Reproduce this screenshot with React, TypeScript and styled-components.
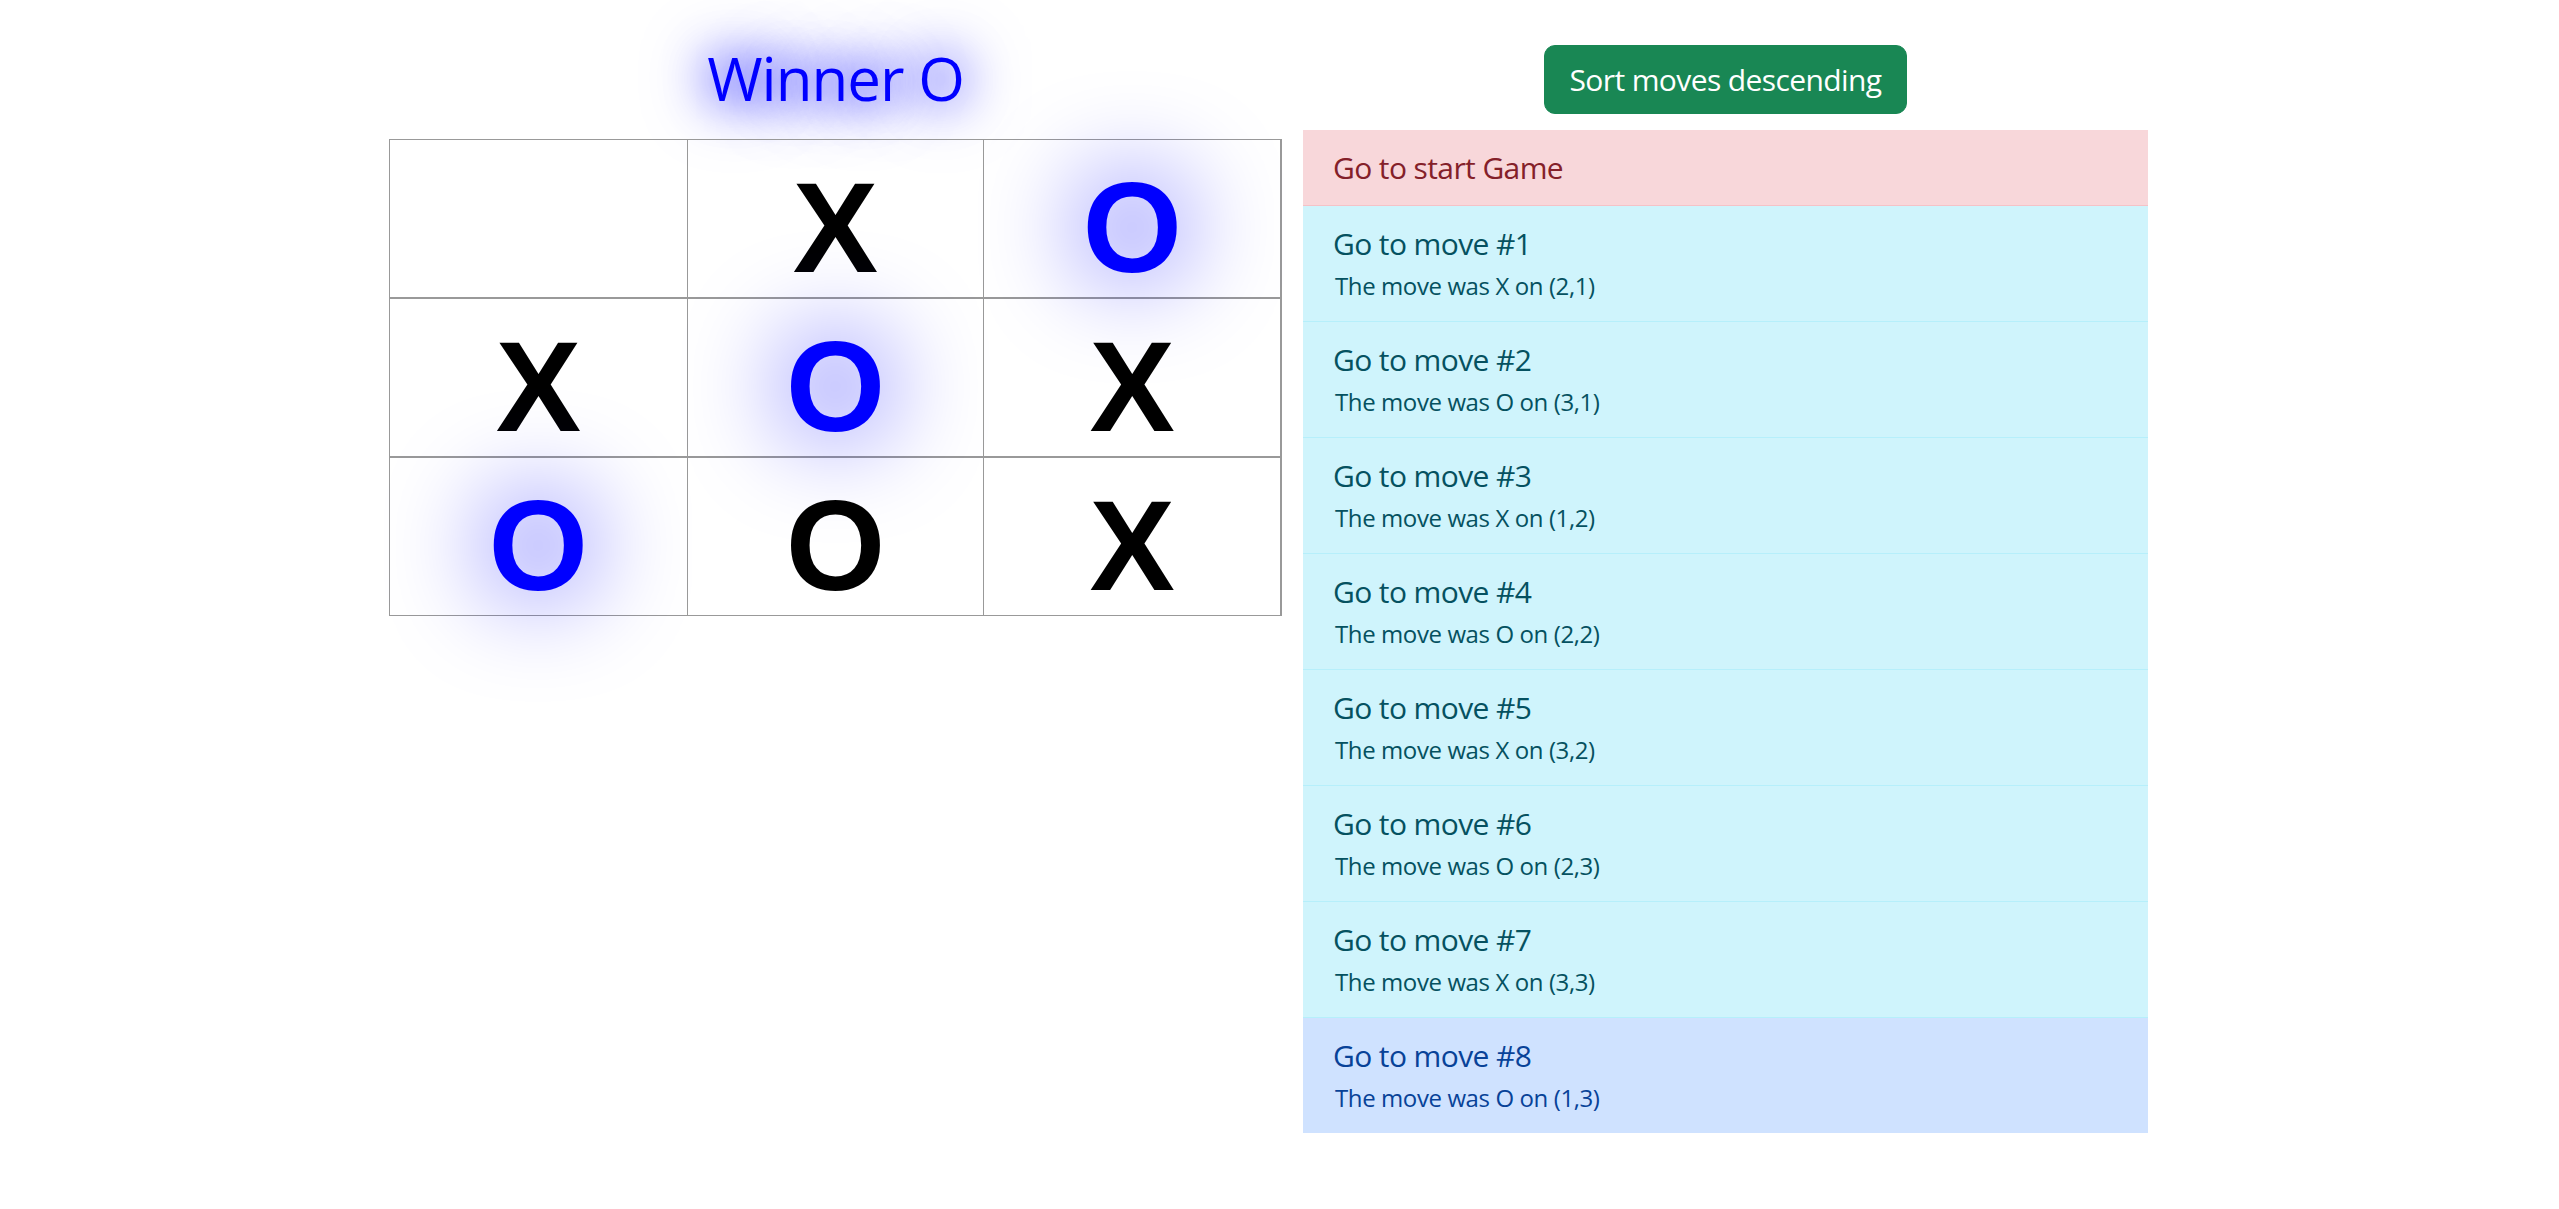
import React from "react";
import styled, { createGlobalStyle, css } from "styled-components";

const GlobalStyle = createGlobalStyle`
  html, body { margin: 0; padding: 0; background: #fff; }
  body { font-family: "Open Sans", "Noto Sans", sans-serif; }
`;

const Page = styled.div`
  display: flex;
  align-items: flex-start;
  gap: 21px;
  padding-left: 389px;
`;

const LeftCol = styled.div`
  width: 893px;
  display: flex;
  flex-direction: column;
  align-items: center;
`;

const Title = styled.h1`
  margin: 42px 0 25px;
  font-family: "Open Sans", "Noto Sans", sans-serif;
  font-weight: 400;
  font-size: 60px;
  line-height: 72px;
  letter-spacing: -1px;
  color: #0000ff;
  text-shadow: 0 0 45px #0000ff, 0 0 70px #0000ff;
`;

const Board = styled.div`
  width: 893px;
  box-sizing: border-box;
  border: 1px solid #999;
  border-right-width: 2px;
`;

const BoardRow = styled.div`
  display: grid;
  grid-template-columns: repeat(3, 1fr);
  & + & {
    border-top: 2px solid #999;
  }
`;

const Cell = styled.div<{ $win?: boolean }>`
  height: 157px;
  box-sizing: border-box;
  padding-top: 18px;
  display: flex;
  align-items: center;
  justify-content: center;
  font-family: "Liberation Sans", Arial, sans-serif;
  font-weight: 700;
  font-size: 128px;
  line-height: 1;
  color: #000;
  & + & {
    border-left: 1px solid #999;
  }
  ${(p) =>
    p.$win &&
    css`
      color: #0000ff;
      text-shadow: 0 0 100px #0000ff;
    `}
`;

const RightCol = styled.div`
  width: 845px;
  display: flex;
  flex-direction: column;
  align-items: center;
`;

const SortButton = styled.button`
  margin-top: 45px;
  height: 69px;
  padding: 0 24px;
  border: 1px solid #198754;
  border-radius: 11px;
  background: #198754;
  color: #fff;
  font-family: "Open Sans", "Noto Sans", sans-serif;
  font-size: 30px;
  line-height: 45px;
  letter-spacing: -0.6px;
  cursor: pointer;
`;

const MoveList = styled.div`
  margin-top: 16px;
  width: 100%;
  display: flex;
  flex-direction: column;
`;

const variants = {
  danger: { bg: "#f8d7da", fg: "#842029", border: "#f5c2c7" },
  info: { bg: "#cff4fc", fg: "#055160", border: "#b6effb" },
  primary: { bg: "#cfe2ff", fg: "#084298", border: "#b6d4fe" },
};

type Variant = keyof typeof variants;

const MoveItem = styled.div<{ $variant: Variant }>`
  padding: 15px 30px;
  background: ${(p) => variants[p.$variant].bg};
  color: ${(p) => variants[p.$variant].fg};
  border-bottom: 1px solid ${(p) => variants[p.$variant].border};
  letter-spacing: -0.6px;
  &:last-child {
    border-bottom: none;
  }
`;

const MoveTitle = styled.div`
  font-size: 30px;
  line-height: 45px;
`;

const MoveDetail = styled.div`
  font-size: 24px;
  line-height: 40px;
  padding-left: 2px;
  letter-spacing: -0.4px;
`;

const squares: (string | null)[] = [null, "X", "O", "X", "O", "X", "O", "O", "X"];
const winning = [2, 4, 6];

const moves = [
  { n: 1, p: "X", at: "(2,1)" },
  { n: 2, p: "O", at: "(3,1)" },
  { n: 3, p: "X", at: "(1,2)" },
  { n: 4, p: "O", at: "(2,2)" },
  { n: 5, p: "X", at: "(3,2)" },
  { n: 6, p: "O", at: "(2,3)" },
  { n: 7, p: "X", at: "(3,3)" },
  { n: 8, p: "O", at: "(1,3)" },
];

export default function App() {
  return (
    <>
      <GlobalStyle />
      <Page>
        <LeftCol>
          <Title>Winner O</Title>
          <Board>
            {[0, 1, 2].map((r) => (
              <BoardRow key={r}>
                {[0, 1, 2].map((c) => {
                  const i = r * 3 + c;
                  return (
                    <Cell key={c} $win={winning.includes(i)}>
                      {squares[i]}
                    </Cell>
                  );
                })}
              </BoardRow>
            ))}
          </Board>
        </LeftCol>
        <RightCol>
          <SortButton>Sort moves descending</SortButton>
          <MoveList>
            <MoveItem $variant="danger">
              <MoveTitle>Go to start Game</MoveTitle>
            </MoveItem>
            {moves.map((m) => (
              <MoveItem key={m.n} $variant={m.n === 8 ? "primary" : "info"}>
                <MoveTitle>Go to move #{m.n}</MoveTitle>
                <MoveDetail>
                  The move was {m.p} on {m.at}
                </MoveDetail>
              </MoveItem>
            ))}
          </MoveList>
        </RightCol>
      </Page>
    </>
  );
}
